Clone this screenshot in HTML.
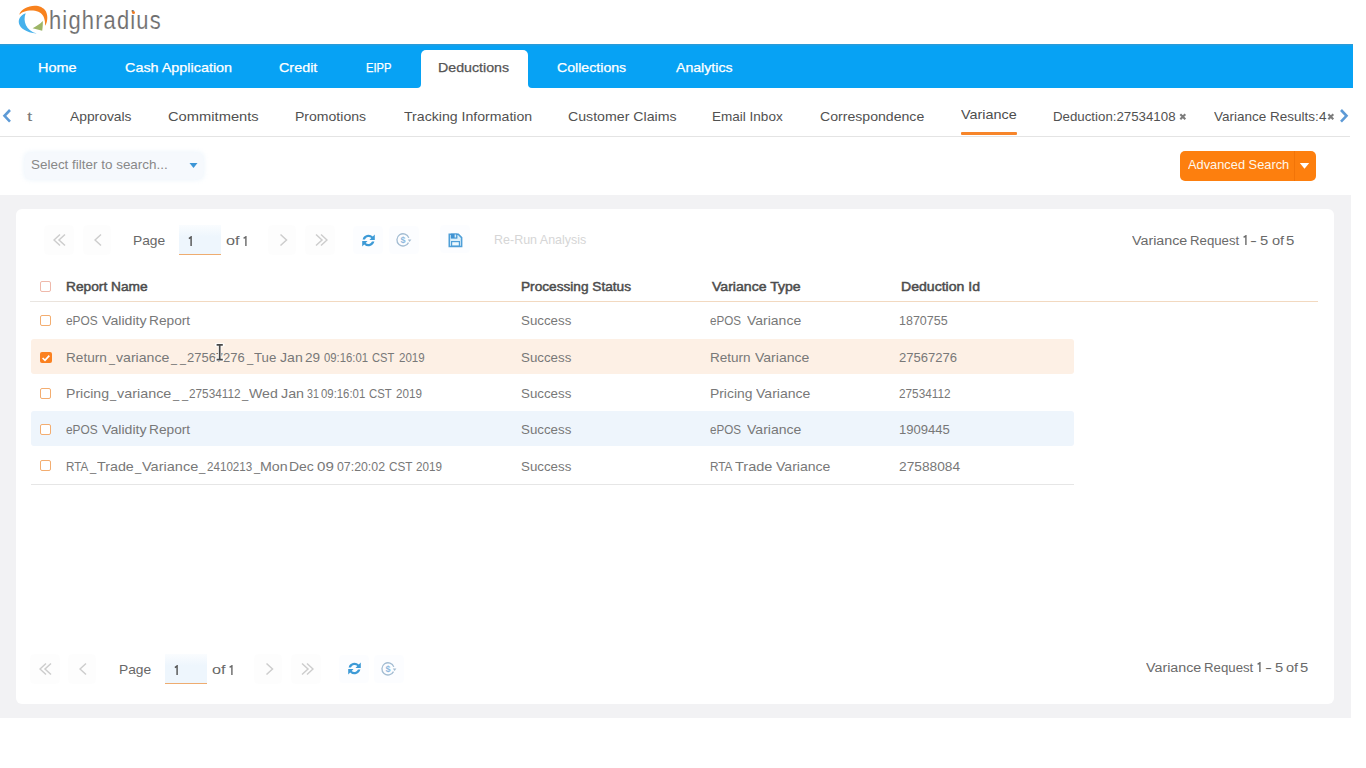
<!DOCTYPE html>
<html><head><meta charset="utf-8"><title>HighRadius - Variance</title>
<style>
html,body{margin:0;padding:0;width:1366px;height:768px;overflow:hidden;background:#ffffff}
body{position:relative;font-family:"Liberation Sans",sans-serif}
.abs{position:absolute;display:block}
.t{position:absolute;white-space:nowrap;line-height:1;transform-origin:0 0;font-family:"Liberation Sans",sans-serif}
.m{-webkit-text-stroke:0.25px currentColor}
.sb{-webkit-text-stroke:0.45px currentColor}
.cb{position:absolute;width:9px;height:9px;border:1.4px solid #f3ad70;border-radius:2px;background:#fff}
.pbtn{background:rgba(0,0,0,0.006);border-radius:4px}
.pbtn2{background:rgba(200,225,250,0.06);border-radius:4px}
</style></head><body>
<svg class="abs" style="left:0;top:0" width="200" height="42" viewBox="0 0 200 42">
<path d="M19.2,14.8 C22,6 40,1.5 46,11.5 C48.2,16.5 47.5,22 45.2,25.8 C45.2,20 44.5,11.5 33,10.5 C26,10.2 22,12 19.2,14.8 Z" fill="#f8821e"/>
<path d="M25.7,13.2 C15.5,16.5 14.5,31 36.8,33.6 C26,30.5 22.5,21 25.7,13.2 Z" fill="#46b1ec"/>
<path d="M42.8,21.0 C40,24 36,26.5 32.6,28.2 C36,29 39,30 42.2,30.8 C42.8,27 42.9,24 42.8,21.0 Z" fill="#9db566"/>
</svg>
<span class="t" style="left:48.66px;top:7.71px;font-size:25.5px;color:#6f6f6f;letter-spacing:1.356px;transform:scaleX(0.860);-webkit-text-stroke:0.12px #ffffff;paint-order:fill stroke">highradius</span>
<div class="abs" style="left:132px;top:10.5px;width:3px;height:3px;border-radius:50%;background:#f27b1e"></div>
<div class="abs" style="left:0;top:44px;width:1353px;height:44px;background:#07a2f4"></div>
<div class="abs" style="left:0;top:44px;width:1353px;height:1px;background:#2a9bd8"></div>
<div class="abs" style="left:0;top:45px;width:1353px;height:1px;background:#17a0ea"></div>
<div class="abs" style="left:421px;top:49.5px;width:106.5px;height:38.5px;background:#fff;border-radius:5px 5px 0 0"></div>
<div class="abs" style="left:416px;top:83px;width:5px;height:5px;background:#fff"></div>
<div class="abs" style="left:416px;top:83px;width:5px;height:5px;background:#07a2f4;border-bottom-right-radius:4px"></div>
<div class="abs" style="left:527.5px;top:83px;width:5px;height:5px;background:#fff"></div>
<div class="abs" style="left:527.5px;top:83px;width:5px;height:5px;background:#07a2f4;border-bottom-left-radius:4px"></div>
<span class="t m" style="left:38.14px;top:62.16px;font-size:12.57px;color:#ffffff;transform:scaleX(1.1498)">Home</span>
<span class="t m" style="left:124.78px;top:62.16px;font-size:12.57px;color:#ffffff;transform:scaleX(1.1446)">Cash Application</span>
<span class="t m" style="left:278.78px;top:62.16px;font-size:12.57px;color:#ffffff;transform:scaleX(1.1434)">Credit</span>
<span class="t m" style="left:365.60px;top:62.16px;font-size:12.57px;color:#ffffff;transform:scaleX(0.8904)">EIPP</span>
<span class="t m" style="left:557.29px;top:62.16px;font-size:12.57px;color:#ffffff;transform:scaleX(1.1262)">Collections</span>
<span class="t m" style="left:676.00px;top:62.16px;font-size:12.57px;color:#ffffff;transform:scaleX(1.1240)">Analytics</span>
<span class="t m" style="left:438.36px;top:62.16px;font-size:12.57px;color:#555555;transform:scaleX(1.1310)">Deductions</span>
<span class="t" style="left:70.00px;top:110.92px;font-size:12.26px;color:#515151;transform:scaleX(1.1285)">Approvals</span>
<span class="t" style="left:167.76px;top:110.92px;font-size:12.26px;color:#515151;transform:scaleX(1.2000)">Commitments</span>
<span class="t" style="left:294.88px;top:110.92px;font-size:12.26px;color:#515151;transform:scaleX(1.1467)">Promotions</span>
<span class="t" style="left:403.72px;top:110.92px;font-size:12.26px;color:#515151;transform:scaleX(1.1526)">Tracking Information</span>
<span class="t" style="left:567.79px;top:110.92px;font-size:12.26px;color:#515151;transform:scaleX(1.1563)">Customer Claims</span>
<span class="t" style="left:712.42px;top:110.92px;font-size:12.26px;color:#515151;transform:scaleX(1.1042)">Email Inbox</span>
<span class="t" style="left:819.79px;top:110.92px;font-size:12.26px;color:#515151;transform:scaleX(1.1511)">Correspondence</span>
<span class="t" style="left:1053.44px;top:110.92px;font-size:12.26px;color:#515151;transform:scaleX(1.0836)">Deduction:27534108</span>
<span class="t" style="left:1214.43px;top:110.92px;font-size:12.26px;color:#515151;transform:scaleX(1.1029)">Variance Results:4</span>
<span class="t" style="left:961.43px;top:109.42px;font-size:12.26px;color:#4d4d4d;transform:scaleX(1.1747)">Variance</span>
<span class="t" style="left:26.51px;top:110.92px;font-size:12.26px;color:#7a7a7a;transform:scaleX(1.5677)">t</span>
<div class="abs" style="left:961px;top:132px;width:56px;height:3px;background:#f7852a;border-radius:1px"></div>
<div class="abs" style="left:0;top:136px;width:1350px;height:1px;background:#e4e4e4"></div>
<svg class="abs" style="left:0;top:106px" width="16" height="20"><path d="M10,4 L4.5,9.8 L10,15.6" fill="none" stroke="#5d9ad6" stroke-width="2.6"/></svg>
<svg class="abs" style="left:1336px;top:106px" width="16" height="20"><path d="M5,4 L10.5,9.8 L5,15.6" fill="none" stroke="#5d9ad6" stroke-width="2.6"/></svg>
<svg class="abs" style="left:1177.7px;top:111.5px" width="10" height="10"><path d="M2.3,2.3 L7.3,7.3 M7.3,2.3 L2.3,7.3" stroke="#7c7c7c" stroke-width="2.1"/></svg>
<svg class="abs" style="left:1326.2px;top:111.5px" width="10" height="10"><path d="M2.3,2.3 L7.3,7.3 M7.3,2.3 L2.3,7.3" stroke="#7c7c7c" stroke-width="2.1"/></svg>
<div class="abs" style="left:25px;top:152.5px;width:178px;height:26px;background:#f6f9fd;border-radius:5px;box-shadow:0 0 5px 1px rgba(225,238,250,.6)"></div>
<span class="t" style="left:31.20px;top:159.24px;font-size:12.36px;color:#888888;transform:scaleX(1.0876)">Select filter to search...</span>
<svg class="abs" style="left:189px;top:162px" width="10" height="7"><path d="M0.5,1 L8.5,1 L4.5,6 Z" fill="#3c95d6"/></svg>
<div class="abs" style="left:1180px;top:151px;width:136px;height:30px;background:#fd7f0e;border-radius:5px"></div>
<div class="abs" style="left:1294px;top:151px;width:1px;height:30px;background:#f27408"></div>
<span class="t" style="left:1187.50px;top:159.41px;font-size:12.15px;color:#fff7ea;transform:scaleX(1.0561)">Advanced Search</span>
<svg class="abs" style="left:1299px;top:162px" width="12" height="8"><path d="M0.8,1 L10.2,1 L5.5,6.8 Z" fill="#ffffff"/></svg>
<div class="abs" style="left:0;top:195px;width:1350.5px;height:523px;background:#f2f2f4"></div>
<div class="abs" style="left:16px;top:209px;width:1317.5px;height:495px;background:#ffffff;border-radius:6px"></div>
<div class="abs pbtn" style="left:44.0px;top:225.0px;width:30px;height:30px"></div>
<svg class="abs" style="left:53.0px;top:233.0px" width="14" height="14"><path d="M7,1.5 L1,7 L7,12.5 M12,1.5 L6,7 L12,12.5" fill="none" stroke="#cdcdcd" stroke-width="1.5"/></svg>
<div class="abs pbtn" style="left:82.5px;top:225.0px;width:28px;height:30px"></div>
<svg class="abs" style="left:93.5px;top:233.0px" width="9" height="14"><path d="M7,1.5 L1,7 L7,12.5" fill="none" stroke="#cdcdcd" stroke-width="1.5"/></svg>
<span class="t" style="left:132.90px;top:234.11px;font-size:12.98px;color:#686868;transform:scaleX(1.0634)">Page</span>
<div class="abs" style="left:179.0px;top:225.0px;width:42px;height:30px;background:linear-gradient(180deg,rgba(238,246,253,0.3),#eef6fd 40%);border-bottom:1.6px solid #eeac70;box-sizing:border-box"></div>
<svg class="abs" style="left:188.2px;top:236.2px" width="6" height="12"><path d="M0.9,2.6 L3.1,0.9 L3.1,10" fill="none" stroke="#555" stroke-width="1.45"/></svg>
<span class="t" style="left:226.35px;top:234.11px;font-size:12.98px;color:#686868;transform:scaleX(1.2503)">of</span>
<svg class="abs" style="left:242.6px;top:236.0px" width="6" height="12"><path d="M0.6,2.4 L2.9,0.8 L2.9,10" fill="none" stroke="#686868" stroke-width="1.4"/></svg>
<div class="abs pbtn" style="left:268.0px;top:225.0px;width:28px;height:30px"></div>
<svg class="abs" style="left:279.0px;top:233.0px" width="9" height="14"><path d="M1.5,1.5 L7.5,7 L1.5,12.5" fill="none" stroke="#cdcdcd" stroke-width="1.5"/></svg>
<div class="abs pbtn" style="left:305.0px;top:225.0px;width:30px;height:30px"></div>
<svg class="abs" style="left:314.0px;top:233.0px" width="14" height="14"><path d="M2,1.5 L8,7 L2,12.5 M7,1.5 L13,7 L7,12.5" fill="none" stroke="#cdcdcd" stroke-width="1.5"/></svg>
<div class="abs pbtn2" style="left:353.0px;top:226.0px;width:30px;height:28px"></div>
<svg class="abs" style="left:361.0px;top:232.5px" width="15" height="15" viewBox="0 0 15 15"><path d="M1.6,6.4 A6,6 0 0 1 11.8,3.6 L13.8,1.6 L13.8,6.9 L8.5,6.9 L10.3,5.1 A3.9,3.9 0 0 0 4,6.4 Z M13.4,8.6 A6,6 0 0 1 3.2,11.4 L1.2,13.4 L1.2,8.1 L6.5,8.1 L4.7,9.9 A3.9,3.9 0 0 0 11,8.6 Z" fill="#3d9ad6"/></svg>
<div class="abs pbtn2" style="left:389.0px;top:226.0px;width:30px;height:28px"></div>
<svg class="abs" style="left:396.0px;top:232.2px" width="17" height="16" viewBox="0 0 17 16"><path d="M12.8,5.9 A6.1,6.1 0 1 0 12.5,10.6" fill="none" stroke="#a3bcd2" stroke-width="1.3"/><path d="M11.8,7.4 L15.4,7.4 L13.6,10 Z" fill="#a3bcd2"/><text x="7.1" y="11.2" font-size="9" font-weight="bold" text-anchor="middle" fill="#8cb8de" font-family="Liberation Sans">$</text></svg>
<div class="abs pbtn2" style="left:440px;top:225px;width:30px;height:28px"></div>
<svg class="abs" style="left:447.5px;top:233px" width="15" height="15" viewBox="0 0 15 15"><path d="M1.3,1.3 H10.3 L13.6,4.6 V13.5 H1.3 Z" fill="#dcf0fb" stroke="#4f9fd8" stroke-width="1.6"/><rect x="2.8" y="0.6" width="6.6" height="5" fill="#3f93d3"/><rect x="6.6" y="1.5" width="1.6" height="3" fill="#d9eefa"/><rect x="3.6" y="8.6" width="7.8" height="4.4" fill="#eef9fe" stroke="#4f9fd8" stroke-width="1.2"/></svg>
<span class="t" style="left:494.00px;top:234.48px;font-size:12.67px;color:#d6d6d6;transform:scaleX(0.9873)">Re-Run Analysis</span>
<span class="t" style="left:1131.93px;top:234.60px;font-size:12.88px;color:#6a6a6a;transform:scaleX(1.1081)">Variance</span>
<span class="t" style="left:1189.94px;top:234.60px;font-size:12.88px;color:#6a6a6a;transform:scaleX(1.0256)">Request</span>
<span class="t" style="left:1250.26px;top:234.60px;font-size:12.88px;color:#6a6a6a;transform:scaleX(1.6168)">-</span>
<span class="t" style="left:1260.21px;top:234.60px;font-size:12.88px;color:#6a6a6a;transform:scaleX(1.1446)">5</span>
<span class="t" style="left:1271.72px;top:234.60px;font-size:12.88px;color:#6a6a6a;transform:scaleX(1.1333)">of</span>
<span class="t" style="left:1286.40px;top:234.60px;font-size:12.88px;color:#6a6a6a;transform:scaleX(1.1610)">5</span>
<svg class="abs" style="left:1242.8px;top:234.6px" width="6" height="12"><path d="M0.6,2.4 L2.9,0.8 L2.9,10" fill="none" stroke="#6a6a6a" stroke-width="1.4"/></svg>
<div class="abs" style="left:30px;top:300.8px;width:1288px;height:1.5px;background:linear-gradient(90deg,#e9e6e3,#f2d9c0 10%,#f2d9c0)"></div>
<div class="abs cb" style="left:40px;top:280.5px;border-color:#efb9ab"></div>
<span class="t sb" style="left:66.40px;top:280.52px;font-size:12.26px;color:#4c4c4c;transform:scaleX(1.1215)">Report Name</span>
<span class="t sb" style="left:521.41px;top:280.52px;font-size:12.26px;color:#4c4c4c;transform:scaleX(1.1142)">Processing Status</span>
<span class="t sb" style="left:711.93px;top:280.52px;font-size:12.26px;color:#4c4c4c;transform:scaleX(1.1487)">Variance Type</span>
<span class="t sb" style="left:900.87px;top:280.52px;font-size:12.26px;color:#4c4c4c;transform:scaleX(1.1485)">Deduction Id</span>
<div class="abs cb" style="left:40px;top:315.0px"></div>
<span class="t" style="left:66.22px;top:315.21px;font-size:12.15px;color:#787878;transform:scaleX(0.9790)">ePOS</span>
<span class="t" style="left:101.93px;top:315.21px;font-size:12.15px;color:#787878;transform:scaleX(1.1668)">Validity</span>
<span class="t" style="left:149.10px;top:315.21px;font-size:12.15px;color:#787878;transform:scaleX(1.1290)">Report</span>
<span class="t" style="left:521.10px;top:315.21px;font-size:12.15px;color:#787878;transform:scaleX(1.0963)">Success</span>
<span class="t" style="left:710.23px;top:315.21px;font-size:12.15px;color:#787878;transform:scaleX(0.9599)">ePOS</span>
<span class="t" style="left:746.73px;top:315.21px;font-size:12.15px;color:#787878;transform:scaleX(1.1523)">Variance</span>
<span class="t" style="left:898.66px;top:315.21px;font-size:12.15px;color:#787878;transform:scaleX(1.0287)">1870755</span>
<div class="abs" style="left:31px;top:338.6px;width:1043px;height:35px;background:#fdf0e5;border-radius:3px"></div>
<div class="abs" style="left:40px;top:351.8px;width:11.5px;height:11.5px;background:#fb8120;border-radius:2px"></div>
<svg class="abs" style="left:40px;top:351.8px" width="12" height="12"><path d="M2.6,6 L5,8.3 L9.3,3.6" fill="none" stroke="#fff" stroke-width="1.7"/></svg>
<span class="t" style="left:65.91px;top:351.61px;font-size:12.15px;color:#787878;transform:scaleX(1.1210)">Return</span>
<span class="t" style="left:108.86px;top:351.61px;font-size:12.15px;color:#787878;transform:scaleX(0.8861)">_</span>
<span class="t" style="left:115.73px;top:351.61px;font-size:12.15px;color:#787878;transform:scaleX(1.1625)">variance</span>
<span class="t" style="left:171.46px;top:351.61px;font-size:12.15px;color:#787878;transform:scaleX(0.8861)">_</span>
<span class="t" style="left:179.76px;top:351.61px;font-size:12.15px;color:#787878;transform:scaleX(0.8861)">_</span>
<span class="t" style="left:187.35px;top:351.61px;font-size:12.15px;color:#787878;transform:scaleX(1.0681)">27567276</span>
<span class="t" style="left:247.07px;top:351.61px;font-size:12.15px;color:#787878;transform:scaleX(0.9283)">_</span>
<span class="t" style="left:254.33px;top:351.61px;font-size:12.15px;color:#787878;transform:scaleX(1.0920)">Tue</span>
<span class="t" style="left:280.49px;top:351.61px;font-size:12.15px;color:#787878;transform:scaleX(1.1616)">Jan</span>
<span class="t" style="left:305.42px;top:351.61px;font-size:12.15px;color:#787878;transform:scaleX(1.1186)">29</span>
<span class="t" style="left:324.05px;top:351.61px;font-size:12.15px;color:#787878;transform:scaleX(0.9320)">09:16:01</span>
<span class="t" style="left:371.64px;top:351.61px;font-size:12.15px;color:#787878;transform:scaleX(0.9166)">CST</span>
<span class="t" style="left:398.52px;top:351.61px;font-size:12.15px;color:#787878;transform:scaleX(0.9502)">2019</span>
<span class="t" style="left:521.10px;top:351.61px;font-size:12.15px;color:#787878;transform:scaleX(1.0963)">Success</span>
<span class="t" style="left:709.62px;top:351.61px;font-size:12.15px;color:#787878;transform:scaleX(1.1153)">Return</span>
<span class="t" style="left:754.73px;top:351.61px;font-size:12.15px;color:#787878;transform:scaleX(1.1545)">Variance</span>
<span class="t" style="left:898.95px;top:351.61px;font-size:12.15px;color:#787878;transform:scaleX(1.0756)">27567276</span>
<div class="abs cb" style="left:40px;top:387.7px"></div>
<span class="t" style="left:66.17px;top:387.91px;font-size:12.15px;color:#787878;transform:scaleX(1.1592)">Pricing</span>
<span class="t" style="left:109.97px;top:387.91px;font-size:12.15px;color:#787878;transform:scaleX(0.9142)">_</span>
<span class="t" style="left:116.73px;top:387.91px;font-size:12.15px;color:#787878;transform:scaleX(1.1845)">variance</span>
<span class="t" style="left:172.87px;top:387.91px;font-size:12.15px;color:#787878;transform:scaleX(0.9142)">_</span>
<span class="t" style="left:181.67px;top:387.91px;font-size:12.15px;color:#787878;transform:scaleX(0.9142)">_</span>
<span class="t" style="left:189.01px;top:387.91px;font-size:12.15px;color:#787878;transform:scaleX(0.9700)">27534112</span>
<span class="t" style="left:241.67px;top:387.91px;font-size:12.15px;color:#787878;transform:scaleX(0.9283)">_</span>
<span class="t" style="left:249.13px;top:387.91px;font-size:12.15px;color:#787878;transform:scaleX(1.1640)">Wed</span>
<span class="t" style="left:281.29px;top:387.91px;font-size:12.15px;color:#787878;transform:scaleX(1.1777)">Jan</span>
<span class="t" style="left:306.67px;top:387.91px;font-size:12.15px;color:#787878;transform:scaleX(0.8750)">31</span>
<span class="t" style="left:321.24px;top:387.91px;font-size:12.15px;color:#787878;transform:scaleX(0.9363)">09:16:01</span>
<span class="t" style="left:368.73px;top:387.91px;font-size:12.15px;color:#787878;transform:scaleX(0.9379)">CST</span>
<span class="t" style="left:395.82px;top:387.91px;font-size:12.15px;color:#787878;transform:scaleX(0.9618)">2019</span>
<span class="t" style="left:521.10px;top:387.91px;font-size:12.15px;color:#787878;transform:scaleX(1.0963)">Success</span>
<span class="t" style="left:709.59px;top:387.91px;font-size:12.15px;color:#787878;transform:scaleX(1.1423)">Pricing</span>
<span class="t" style="left:756.23px;top:387.91px;font-size:12.15px;color:#787878;transform:scaleX(1.1566)">Variance</span>
<span class="t" style="left:899.01px;top:387.91px;font-size:12.15px;color:#787878;transform:scaleX(0.9700)">27534112</span>
<div class="abs" style="left:31px;top:411.2px;width:1043px;height:35px;background:#eef5fc;border-radius:3px"></div>
<div class="abs cb" style="left:40px;top:424.0px"></div>
<span class="t" style="left:66.22px;top:424.21px;font-size:12.15px;color:#787878;transform:scaleX(0.9790)">ePOS</span>
<span class="t" style="left:101.93px;top:424.21px;font-size:12.15px;color:#787878;transform:scaleX(1.1668)">Validity</span>
<span class="t" style="left:149.10px;top:424.21px;font-size:12.15px;color:#787878;transform:scaleX(1.1290)">Report</span>
<span class="t" style="left:521.10px;top:424.21px;font-size:12.15px;color:#787878;transform:scaleX(1.0963)">Success</span>
<span class="t" style="left:710.23px;top:424.21px;font-size:12.15px;color:#787878;transform:scaleX(0.9599)">ePOS</span>
<span class="t" style="left:746.73px;top:424.21px;font-size:12.15px;color:#787878;transform:scaleX(1.1566)">Variance</span>
<span class="t" style="left:898.62px;top:424.21px;font-size:12.15px;color:#787878;transform:scaleX(1.0767)">1909445</span>
<div class="abs cb" style="left:40px;top:460.3px"></div>
<span class="t" style="left:66.37px;top:460.51px;font-size:12.15px;color:#787878;transform:scaleX(0.9603)">RTA</span>
<span class="t" style="left:90.17px;top:460.51px;font-size:12.15px;color:#787878;transform:scaleX(0.9283)">_</span>
<span class="t" style="left:97.01px;top:460.51px;font-size:12.15px;color:#787878;transform:scaleX(1.1768)">Trade</span>
<span class="t" style="left:134.87px;top:460.51px;font-size:12.15px;color:#787878;transform:scaleX(0.9283)">_</span>
<span class="t" style="left:141.93px;top:460.51px;font-size:12.15px;color:#787878;transform:scaleX(1.1975)">Variance</span>
<span class="t" style="left:199.17px;top:460.51px;font-size:12.15px;color:#787878;transform:scaleX(0.9423)">_</span>
<span class="t" style="left:206.52px;top:460.51px;font-size:12.15px;color:#787878;transform:scaleX(0.9570)">2410213</span>
<span class="t" style="left:253.87px;top:460.51px;font-size:12.15px;color:#787878;transform:scaleX(0.9142)">_</span>
<span class="t" style="left:259.86px;top:460.51px;font-size:12.15px;color:#787878;transform:scaleX(1.1702)">Mon</span>
<span class="t" style="left:289.18px;top:460.51px;font-size:12.15px;color:#787878;transform:scaleX(1.1494)">Dec</span>
<span class="t" style="left:317.40px;top:460.51px;font-size:12.15px;color:#787878;transform:scaleX(1.2442)">09</span>
<span class="t" style="left:336.61px;top:460.51px;font-size:12.15px;color:#787878;transform:scaleX(1.0155)">07:20:02</span>
<span class="t" style="left:388.51px;top:460.51px;font-size:12.15px;color:#787878;transform:scaleX(0.9677)">CST</span>
<span class="t" style="left:415.62px;top:460.51px;font-size:12.15px;color:#787878;transform:scaleX(0.9618)">2019</span>
<span class="t" style="left:521.10px;top:460.51px;font-size:12.15px;color:#787878;transform:scaleX(1.0963)">Success</span>
<span class="t" style="left:709.76px;top:460.51px;font-size:12.15px;color:#787878;transform:scaleX(0.9693)">RTA</span>
<span class="t" style="left:735.11px;top:460.51px;font-size:12.15px;color:#787878;transform:scaleX(1.1965)">Trade</span>
<span class="t" style="left:776.13px;top:460.51px;font-size:12.15px;color:#787878;transform:scaleX(1.1566)">Variance</span>
<span class="t" style="left:898.91px;top:460.51px;font-size:12.15px;color:#787878;transform:scaleX(1.1297)">27588084</span>
<div class="abs" style="left:31px;top:484px;width:1043px;height:1px;background:#e6e6e6"></div>
<svg class="abs" style="left:214px;top:342px" width="12" height="20"><path d="M2.2,2.8 H9.2 M5.7,2.8 V17.6 M2.2,17.6 H9.2" fill="none" stroke="#ffffff" stroke-width="3.2" stroke-linecap="round"/><path d="M2.6,2.8 H8.8 M5.7,2.8 V17.6 M2.6,17.6 H8.8" fill="none" stroke="#4a4a4a" stroke-width="1.7"/></svg>
<div class="abs pbtn" style="left:29.5px;top:653.5px;width:30px;height:30px"></div>
<svg class="abs" style="left:38.5px;top:661.5px" width="14" height="14"><path d="M7,1.5 L1,7 L7,12.5 M12,1.5 L6,7 L12,12.5" fill="none" stroke="#cdcdcd" stroke-width="1.5"/></svg>
<div class="abs pbtn" style="left:68.0px;top:653.5px;width:28px;height:30px"></div>
<svg class="abs" style="left:79.0px;top:661.5px" width="9" height="14"><path d="M7,1.5 L1,7 L7,12.5" fill="none" stroke="#cdcdcd" stroke-width="1.5"/></svg>
<span class="t" style="left:118.60px;top:662.61px;font-size:12.98px;color:#686868;transform:scaleX(1.0634)">Page</span>
<div class="abs" style="left:165.0px;top:653.5px;width:42px;height:30px;background:linear-gradient(180deg,rgba(238,246,253,0.3),#eef6fd 40%);border-bottom:1.6px solid #eeac70;box-sizing:border-box"></div>
<svg class="abs" style="left:174.2px;top:664.7px" width="6" height="12"><path d="M0.9,2.6 L3.1,0.9 L3.1,10" fill="none" stroke="#555" stroke-width="1.45"/></svg>
<span class="t" style="left:212.35px;top:662.61px;font-size:12.98px;color:#686868;transform:scaleX(1.2503)">of</span>
<svg class="abs" style="left:228.6px;top:664.5px" width="6" height="12"><path d="M0.6,2.4 L2.9,0.8 L2.9,10" fill="none" stroke="#686868" stroke-width="1.4"/></svg>
<div class="abs pbtn" style="left:254.0px;top:653.5px;width:28px;height:30px"></div>
<svg class="abs" style="left:265.0px;top:661.5px" width="9" height="14"><path d="M1.5,1.5 L7.5,7 L1.5,12.5" fill="none" stroke="#cdcdcd" stroke-width="1.5"/></svg>
<div class="abs pbtn" style="left:291.0px;top:653.5px;width:30px;height:30px"></div>
<svg class="abs" style="left:300.0px;top:661.5px" width="14" height="14"><path d="M2,1.5 L8,7 L2,12.5 M7,1.5 L13,7 L7,12.5" fill="none" stroke="#cdcdcd" stroke-width="1.5"/></svg>
<div class="abs pbtn2" style="left:339.0px;top:654.5px;width:30px;height:28px"></div>
<svg class="abs" style="left:347.0px;top:661.0px" width="15" height="15" viewBox="0 0 15 15"><path d="M1.6,6.4 A6,6 0 0 1 11.8,3.6 L13.8,1.6 L13.8,6.9 L8.5,6.9 L10.3,5.1 A3.9,3.9 0 0 0 4,6.4 Z M13.4,8.6 A6,6 0 0 1 3.2,11.4 L1.2,13.4 L1.2,8.1 L6.5,8.1 L4.7,9.9 A3.9,3.9 0 0 0 11,8.6 Z" fill="#3d9ad6"/></svg>
<div class="abs pbtn2" style="left:374.0px;top:654.5px;width:30px;height:28px"></div>
<svg class="abs" style="left:381.0px;top:660.7px" width="17" height="16" viewBox="0 0 17 16"><path d="M12.8,5.9 A6.1,6.1 0 1 0 12.5,10.6" fill="none" stroke="#a3bcd2" stroke-width="1.3"/><path d="M11.8,7.4 L15.4,7.4 L13.6,10 Z" fill="#a3bcd2"/><text x="7.1" y="11.2" font-size="9" font-weight="bold" text-anchor="middle" fill="#8cb8de" font-family="Liberation Sans">$</text></svg>
<span class="t" style="left:1146.33px;top:662.40px;font-size:12.88px;color:#6a6a6a;transform:scaleX(1.1081)">Variance</span>
<span class="t" style="left:1204.24px;top:662.40px;font-size:12.88px;color:#6a6a6a;transform:scaleX(1.0278)">Request</span>
<span class="t" style="left:1264.54px;top:662.40px;font-size:12.88px;color:#6a6a6a;transform:scaleX(1.6485)">-</span>
<span class="t" style="left:1274.61px;top:662.40px;font-size:12.88px;color:#6a6a6a;transform:scaleX(1.1446)">5</span>
<span class="t" style="left:1286.12px;top:662.40px;font-size:12.88px;color:#6a6a6a;transform:scaleX(1.1235)">of</span>
<span class="t" style="left:1300.21px;top:662.40px;font-size:12.88px;color:#6a6a6a;transform:scaleX(1.1446)">5</span>
<svg class="abs" style="left:1257.2px;top:662.2px" width="6" height="12"><path d="M0.6,2.4 L2.9,0.8 L2.9,10" fill="none" stroke="#6a6a6a" stroke-width="1.4"/></svg>
</body></html>
